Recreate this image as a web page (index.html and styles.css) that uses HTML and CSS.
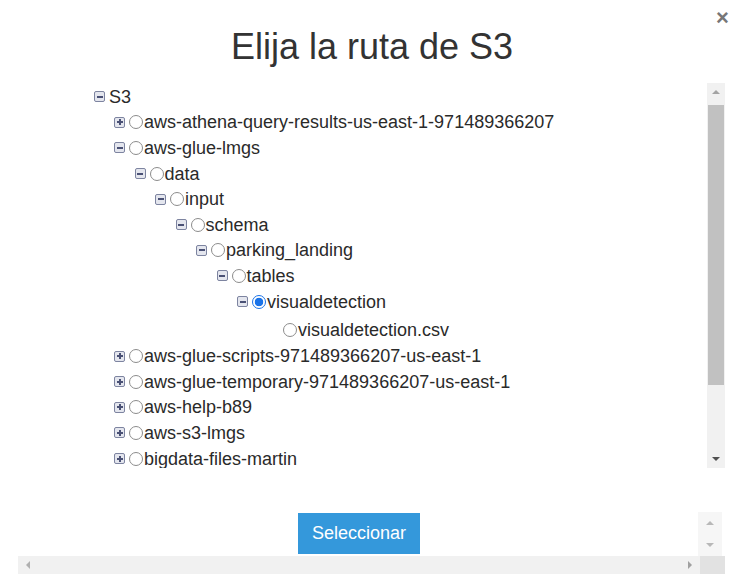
FILE: index.html
```html
<!DOCTYPE html>
<html lang="es">
<head>
<meta charset="utf-8">
<title>Elija la ruta de S3</title>
<link rel="stylesheet" href="styles.css">
</head>
<body>
<div class="modal">
  <span class="close">&times;</span>
  <h1 class="title">Elija la ruta de S3</h1>
  <div class="tree-box">
    <ul class="tree">
      <li class="node lvl0"><span class="tog minus"></span><span class="label">S3</span></li>
      <li class="node lvl1"><span class="tog plus"></span><span class="radio"></span><span class="label">aws-athena-query-results-us-east-1-971489366207</span></li>
      <li class="node lvl1"><span class="tog minus"></span><span class="radio"></span><span class="label">aws-glue-lmgs</span></li>
      <li class="node lvl2"><span class="tog minus"></span><span class="radio"></span><span class="label">data</span></li>
      <li class="node lvl3"><span class="tog minus"></span><span class="radio"></span><span class="label">input</span></li>
      <li class="node lvl4"><span class="tog minus"></span><span class="radio"></span><span class="label">schema</span></li>
      <li class="node lvl5"><span class="tog minus"></span><span class="radio"></span><span class="label">parking_landing</span></li>
      <li class="node lvl6"><span class="tog minus"></span><span class="radio"></span><span class="label">tables</span></li>
      <li class="node lvl7"><span class="tog minus"></span><span class="radio checked"></span><span class="label">visualdetection</span></li>
      <li class="node leaf"><span class="radio"></span><span class="label">visualdetection.csv</span></li>
      <li class="node lvl1"><span class="tog plus"></span><span class="radio"></span><span class="label">aws-glue-scripts-971489366207-us-east-1</span></li>
      <li class="node lvl1"><span class="tog plus"></span><span class="radio"></span><span class="label">aws-glue-temporary-971489366207-us-east-1</span></li>
      <li class="node lvl1"><span class="tog plus"></span><span class="radio"></span><span class="label">aws-help-b89</span></li>
      <li class="node lvl1"><span class="tog plus"></span><span class="radio"></span><span class="label">aws-s3-lmgs</span></li>
      <li class="node lvl1"><span class="tog plus"></span><span class="radio"></span><span class="label">bigdata-files-martin</span></li>
    </ul>
    <div class="vscroll">
      <span class="arrow up"></span>
      <div class="track"><div class="thumb"></div></div>
      <span class="arrow down"></span>
    </div>
  </div>
  <div class="footer">
    <button class="btn">Seleccionar</button>
    <div class="mini-scroll">
      <span class="arrow up"></span>
      <span class="arrow down"></span>
    </div>
  </div>
  <div class="hscroll">
    <span class="arrow left"></span>
    <div class="htrack"></div>
    <span class="arrow right"></span>
  </div>
  <div class="corner"></div>
</div>
</body>
</html>
```
FILE: styles.css
```css
* { box-sizing: border-box; }
html, body { margin: 0; padding: 0; background: #fff; }
body {
  width: 730px;
  height: 574px;
  overflow: hidden;
  font-family: "Liberation Sans", Arial, sans-serif;
  color: #333;
}
.modal {
  position: relative;
  width: 730px;
  height: 574px;
}
.close {
  position: absolute;
  top: 7px;
  left: 716px;
  font-size: 22px;
  font-weight: bold;
  color: #777;
  line-height: 1;
}
.title {
  margin: 0;
  padding-top: 26px;
  height: 83px;
  font-size: 36px;
  font-weight: normal;
  text-align: center;
  padding-left: 14px;
  line-height: 42px;
  color: #333;
}
.tree-box {
  display: flex;
  margin-left: 88px;
  width: 637px;
  height: 385px;
}
.tree {
  flex: 1;
  list-style: none;
  margin: 0;
  padding: 1px 0 0 0;
  overflow: hidden;
  font-size: 18px;
  color: #2a2a2a;
}
.node {
  display: flex;
  align-items: center;
  height: 25.6px;
  white-space: nowrap;
}
.lvl0 { padding-left: 6px; }
.lvl1 { padding-left: 26px; }
.lvl2 { padding-left: 46.5px; }
.lvl3 { padding-left: 67px; }
.lvl4 { padding-left: 87.5px; }
.lvl5 { padding-left: 108px; }
.lvl6 { padding-left: 128.5px; }
.lvl7 { padding-left: 149px; }
.leaf { padding-left: 195px; height: 29px; padding-top: 3px; }
.tog {
  width: 11px;
  height: 11px;
  border: 1px solid #7d84a0;
  border-radius: 2px;
  background: #e4e6ee;
  position: relative;
  margin-right: 4px;
  flex: none;
}
.tog::before {
  content: "";
  position: absolute;
  left: 1.5px;
  top: 3.5px;
  width: 6px;
  height: 2px;
  background: #4a5175;
}
.tog.plus::after {
  content: "";
  position: absolute;
  left: 3.5px;
  top: 1.5px;
  width: 2px;
  height: 6px;
  background: #4a5175;
}
.radio {
  width: 14px;
  height: 14px;
  border: 1px solid #8c8c8c;
  border-radius: 50%;
  background: #fff;
  flex: none;
  margin-right: 1px;
}
.radio.checked {
  border: 1.5px solid #1a73e8;
  background: radial-gradient(circle, #1a73e8 0 4px, #fff 4.6px);
}
.label { line-height: 22px; }
.vscroll {
  width: 18px;
  flex: none;
  background: #f1f1f1;
  display: flex;
  flex-direction: column;
  align-items: center;
}
.track { flex: 1; width: 100%; padding: 4px 1px 0; }
.thumb {
  height: 280px;
  background: #c1c1c1;
}
.arrow {
  width: 0;
  height: 0;
  flex: none;
}
.vscroll .arrow { margin: 7px 0; }
.arrow.up { border-left: 4px solid transparent; border-right: 4px solid transparent; border-bottom: 4px solid #a3a3a3; }
.arrow.down { border-left: 4px solid transparent; border-right: 4px solid transparent; border-top: 4px solid #505050; }
.footer {
  position: relative;
  height: 88px;
  display: flex;
  justify-content: center;
  align-items: flex-end;
  padding-right: 12px;
}
.btn {
  width: 122px;
  height: 41px;
  margin-bottom: 2px;
  border: none;
  background: #3498db;
  color: #fff;
  font-family: "Liberation Sans", Arial, sans-serif;
  font-size: 18px;
}
.mini-scroll {
  position: absolute;
  right: 8px;
  bottom: 0;
  width: 24px;
  height: 44px;
  background: #f6f6f6;
  display: flex;
  flex-direction: column;
  align-items: center;
  justify-content: space-around;
}
.mini-scroll .arrow.up, .mini-scroll .arrow.down { border-bottom-color: #b8b8b8; border-top-color: #b8b8b8; }
.hscroll {
  margin-left: 18px;
  width: 682px;
  height: 18px;
  background: #f1f1f1;
  display: flex;
  align-items: center;
  padding: 0 8px;
}
.htrack { flex: 1; }
.arrow.left { border-top: 4px solid transparent; border-bottom: 4px solid transparent; border-right: 4px solid #b0b0b0; }
.arrow.right { border-top: 4px solid transparent; border-bottom: 4px solid transparent; border-left: 4px solid #a0a0a0; }
.corner {
  position: absolute;
  left: 700px;
  top: 556px;
  width: 25px;
  height: 18px;
  background: #e2e2e2;
}
```
